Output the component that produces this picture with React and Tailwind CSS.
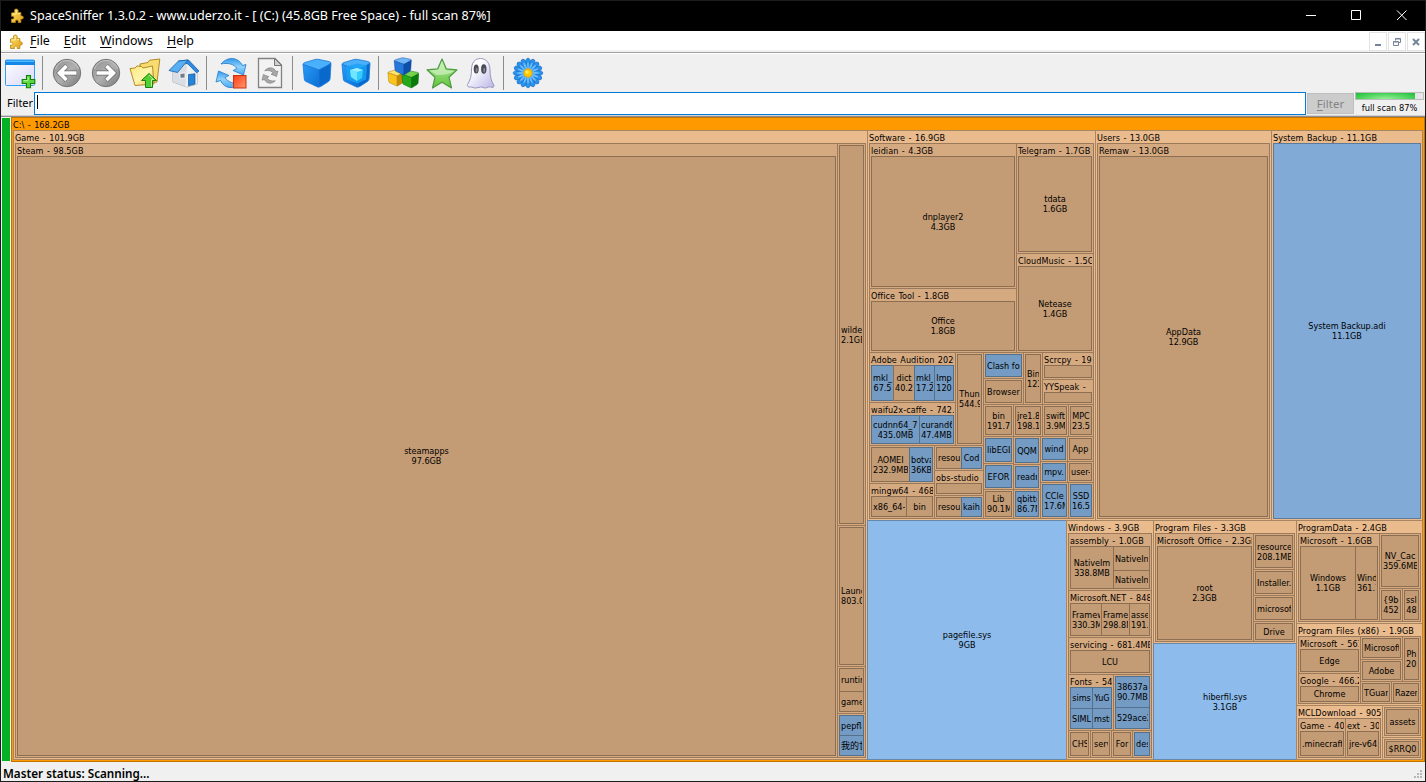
const L = (end, name, size) => ({ kind: 'dir', end, name, size });
const B = (end, name, size) => ({ kind: 'file', end, name, size });
const D = (end, label, child) => ({ kind: 'folder', end, label, child });
const H = (end, ...items) => ({ kind: 'row', end, items });
const V = (end, ...items) => ({ kind: 'col', end, items });

// Every node carries the edge at which it stops along its parent's axis.
const GAME = H(0,
  D(837, 'Steam - 98.5GB', L(0, 'steamapps', '97.6GB')),
  V(865,
    D(525, '', L(0, 'wilder', '2.1GB')),
    D(666, '', L(0, 'Launc', '803.0')),
    D(713, '', V(0, L(691, 'runtin'), L(711, 'game'))),
    D(757, '', V(0, B(735, 'pepfla'), B(755, '我的世'))),
  ),
);

const SOFTWARE_TOP = H(352,
  V(1016,
    D(288, 'leidian - 4.3GB', L(0, 'dnplayer2', '4.3GB')),
    D(352, 'Office Tool - 1.8GB', L(0, 'Office', '1.8GB')),
  ),
  V(1093,
    D(253, 'Telegram - 1.7GB', L(0, 'tdata', '1.6GB')),
    D(352, 'CloudMusic - 1.5GB', L(0, 'Netease', '1.4GB')),
  ),
);

const SOFTWARE_LEFT = V(983,
  H(445,
    V(955,
      D(402, 'Adobe Audition 2020', H(0, B(893, 'mkl_', '67.5'), L(914, 'dict', '40.2'), B(934, 'mkl_', '17.2'), B(953, 'Imp', '120'))),
      D(445, 'waifu2x-caffe - 742.1', H(0, B(919, 'cudnn64_7.', '435.0MB'), B(953, 'curand6', '47.4MB'))),
    ),
    D(983, '', L(0, 'Thun', '544.9')),
  ),
  H(518,
    V(934,
      D(483, '', H(0, L(909, 'AOMEI', '232.9MB'), B(932, 'botva', '36KB'))),
      D(518, 'mingw64 - 468', H(0, L(906, 'x86_64-'), L(932, 'bin'))),
    ),
    V(983,
      D(470, '', H(0, L(961, 'resou'), B(981, 'Cod'))),
      D(495, 'obs-studio - 2', L(0, '')),
      D(518, '', H(0, L(961, 'resou'), B(981, 'kaih'))),
    ),
  ),
);

const SOFTWARE_CORNER = V(1093,
  H(436,
    D(1042, '', L(0, 'jre1.8', '198.1')),
    D(1068, '', L(0, 'swift', '3.9MB')),
    D(1093, '', L(0, 'MPC', '23.5')),
  ),
  H(518,
    V(1040,
      D(464, '', B(0, 'QQM')),
      D(489, '', B(0, 'readm')),
      D(518, '', B(0, 'qbitto', '86.7M')),
    ),
    V(1093,
      H(461, D(1067, '', B(0, 'wind')), D(1093, '', L(0, 'App'))),
      H(482, D(1067, '', B(0, 'mpv.')), D(1093, '', L(0, 'user-'))),
      H(518, D(1068, '', B(0, 'CCle', '17.6M')), D(1093, '', B(0, 'SSD', '16.5'))),
    ),
  ),
);

const SOFTWARE_RIGHT = V(1093,
  H(404,
    V(1023, D(378, '', B(0, 'Clash for')), D(404, '', L(0, 'Browser'))),
    D(1042, '', L(0, 'Bin', '123')),
    V(1093, D(379, 'Scrcpy - 19', L(0, '')), D(404, 'YYSpeak -', L(0, ''))),
  ),
  H(518,
    V(1013,
      D(436, '', L(0, 'bin', '191.7')),
      D(463, '', B(0, 'libEGL')),
      D(489, '', B(0, 'EFOR')),
      D(518, '', L(0, 'Lib', '90.1M')),
    ),
    SOFTWARE_CORNER,
  ),
);

const SOFTWARE = V(0, SOFTWARE_TOP, H(518, SOFTWARE_LEFT, SOFTWARE_RIGHT));

const WINDOWS = V(0,
  D(590, 'assembly - 1.0GB', H(0, L(1113, 'NativeIm', '338.8MB'), V(1149, L(570, 'NativeIn'), L(588, 'NativeIn')))),
  D(637, 'Microsoft.NET - 848', H(0, L(1101, 'Framew', '330.3M'), L(1129, 'Frame', '298.8M'), L(1149, 'asse', '191.'))),
  D(674, 'servicing - 681.4MB', L(0, 'LCU')),
  H(730,
    D(1113, 'Fonts - 54', V(0, H(708, B(1092, 'sims'), B(1111, 'YuG')), H(728, B(1092, 'SIML'), B(1111, 'mstr')))),
    D(1151, '', V(0, B(707, '38637a8', '90.7MB'), B(728, '529ace2'))),
  ),
  H(757,
    D(1090, '', L(0, 'CHS')),
    D(1111, '', L(0, 'serv')),
    D(1132, '', L(0, 'For')),
    D(1151, '', B(0, 'des')),
  ),
);

const PROGRAM_FILES = H(0,
  D(1253, 'Microsoft Office - 2.3GB', L(0, 'root', '2.3GB')),
  V(1294,
    D(569, '', L(0, 'resource', '208.1MB')),
    D(595, '', L(0, 'Installer.')),
    D(621, '', L(0, 'microsoft')),
    D(641, '', L(0, 'Drive')),
  ),
);

const PROGRAM_DATA = H(0,
  D(1379, 'Microsoft - 1.6GB', H(0, L(1355, 'Windows', '1.1GB'), L(1377, 'Wind', '361.7'))),
  V(1420,
    D(588, '', L(0, 'NV_Cac', '359.6MB')),
    H(621, D(1402, '', L(0, '{9bc', '452')), D(1420, '', L(0, 'sslp', '48'))),
  ),
);

const PROGRAM_FILES_X86 = H(0,
  V(1360,
    D(673, 'Microsoft - 561', L(0, 'Edge')),
    D(703, 'Google - 466.2', L(0, 'Chrome')),
  ),
  V(1420,
    H(681,
      V(1402, D(659, '', L(0, 'Microsoft')), D(681, '', L(0, 'Adobe'))),
      D(1420, '', L(0, 'Ph', '20.')),
    ),
    H(703, D(1391, '', L(0, 'TGuar')), D(1420, '', L(0, 'Razer'))),
  ),
);

const UPPER = H(520,
  D(1095, 'Software - 16.9GB', SOFTWARE),
  D(1271, 'Users - 13.0GB', D(0, 'Remaw - 13.0GB', L(0, 'AppData', '12.9GB'))),
  D(1422, 'System Backup - 11.1GB', B(0, 'System Backup.adi', '11.1GB')),
);

const LOWER = H(759,
  B(1066, 'pagefile.sys', '9GB'),
  D(1153, 'Windows - 3.9GB', WINDOWS),
  V(1296,
    D(643, 'Program Files - 3.3GB', PROGRAM_FILES),
    B(759, 'hiberfil.sys', '3.1GB'),
  ),
  V(1422,
    D(623, 'ProgramData - 2.4GB', PROGRAM_DATA),
    D(705, 'Program Files (x86) - 1.9GB', PROGRAM_FILES_X86),
    H(759,
      D(1382, 'MCLDownload - 905', H(0,
        D(1345, 'Game - 40', L(0, '.minecraft')),
        D(1380, 'ext - 302', L(0, 'jre-v64')),
      )),
      V(1422,
        D(737, '', D(0, '', L(0, 'assets'))),
        D(759, '', D(0, '', L(0, '$RRQ0'))),
      ),
    ),
  ),
);

const ROOT = D(0, 'C:\\ - 168.2GB', H(0, D(867, 'Game - 101.9GB', GAME), V(1422, UPPER, LOWER)));

const DIR_SKIN = [
  'bg-[#ff9900] border-[#c17500]',
  'bg-[#eabb8d] border-[#a98663]',
  'bg-[#d6aa80] border-[#9a7a5a]',
  'bg-[#c39b74] border-[#8c6f53]',
];
const FILE_SKIN = [
  '',
  'bg-[#8dbbec] border-[#6787ab]',
  'bg-[#81aad7] border-[#5c7a9c]',
  'bg-[#749bc4] border-[#53708d]',
];

function Tile({ node, level, x0, y0, x1, y1 }) {
  if (node.kind === 'row' || node.kind === 'col') {
    const row = node.kind === 'row';
    let at = row ? x0 : y0;
    return (
      <div className={row ? 'flex' : 'flex flex-col'} style={{ width: x1 - x0, height: y1 - y0 }}>
        {node.items.map((item, i) => {
          const from = at;
          at = item.end;
          const box = row ? { x0: from, x1: item.end, y0, y1 } : { x0, x1, y0: from, y1: item.end };
          return (
            <div key={i} className="shrink-0" style={{ width: box.x1 - box.x0, height: box.y1 - box.y0 }}>
              <Tile node={item} level={level} {...box} />
            </div>
          );
        })}
      </div>
    );
  }
  // Neighbouring tiles share one border line, so each is a pixel larger than its slot.
  const size = { width: x1 - x0 + 1, height: y1 - y0 + 1 };
  const depth = Math.min(level, 3);
  if (node.kind === 'folder') {
    return (
      <div className={`overflow-hidden border ${DIR_SKIN[depth]}`} style={size}>
        {node.label ? (
          <div className="mr-px h-3 overflow-hidden whitespace-pre pl-px leading-[14px] tracking-[0.06px] [word-spacing:0.8px]">{node.label}</div>
        ) : (
          <div className="h-px" />
        )}
        <div className="pl-px">
          <Tile node={node.child} level={level + 1} x0={x0 + 2} y0={y0 + (node.label ? 13 : 2)} x1={x1 - 2} y1={y1 - 2} />
        </div>
      </div>
    );
  }
  const skin = node.kind === 'file' ? FILE_SKIN[depth] : DIR_SKIN[depth];
  return (
    <div className={`flex flex-col justify-center border px-px ${skin}`} style={size}>
      <div className="overflow-hidden whitespace-nowrap text-center leading-[10px]">
        <div>{node.name}</div>
        {node.size && <div>{node.size}</div>}
      </div>
    </div>
  );
}

const Svg = ({ children }) => (
  <svg width="32" height="32" viewBox="0 0 32 32" className="block shrink-0">{children}</svg>
);

const Puzzle = () => (
  <svg width="14" height="16" viewBox="0 0 14 16" className="block shrink-0">
    <path d="M5 4.500C3.800 2.200 4.600 1 6.200 1s2.600 1.200 1.700 3.500h3v3.600c1.400-.6 2.400.2 2.400 1.400s-1 2-2.400 1.400v3.600H8.200c.4-1.700-.4-2.400-1.300-2.400s-1.800.7-1.400 2.400H1.500V11c1.800.3 2.400-.4 2.400-1.300S3.300 8 1.500 8.400V5z" fill="url(#pz)" stroke="#b98212" strokeWidth=".8" />
    <path d="M2.500 6h3.700V2.500M8 5.600h2" stroke="#fff3a0" fill="none" />
  </svg>
);

const Arrow = ({ flip }) => (
  <Svg>
    <circle cx="16" cy="16" r="13.700" fill="url(#gray)" stroke="#757575" />
    <path d="M4.500 12a12 12 0 0 1 23 0" fill="none" stroke="#cdcdcd" opacity=".8" />
    <g transform={flip ? 'translate(32 0) scale(-1 1)' : undefined} fill="none" strokeLinejoin="miter">
      <path d="M15.800 8.700L8.500 16l7.300 7.300M9.500 16H26" stroke="#6a6a6a" strokeWidth="5" />
      <path d="M15.500 9L8.500 16l7 7M9.500 16H25.500" stroke="#fff" strokeWidth="3.600" />
    </g>
  </Svg>
);

const NewWindow = () => (
  <Svg>
    <rect x="1.500" y="3" width="29" height="25.500" rx="1" fill="url(#win)" stroke="#2fa0f5" />
    <path d="M1 4.500Q1 3 2.500 3h27Q31 3 31 4.500V8H1z" fill="#1488e8" />
    <path d="M2 4.300h28" stroke="#4fb8ff" strokeWidth="1.400" />
    <path d="M22.500 18.500h4v4h4.300v4h-4.300v4.300h-4v-4.300h-4.300v-4h4.300z" fill="#58d83d" stroke="#16800f" strokeWidth="1.100" />
    <path d="M24 20v3.700h-4.300" stroke="#b9f7a1" fill="none" />
  </Svg>
);

const FolderUp = () => (
  <Svg>
    <path d="M11 7l8-1.500 1.500-2.300L30.800 2 28 25l-16 2z" fill="#f7dd71" stroke="#b48a22" />
    <path d="M1 11.500l5-.5 2-2 4.500.5 1.500 1.500 9.500-2L25 27 6 28.500z" fill="url(#folder)" stroke="#b48a22" />
    <path d="M20 16.500l7.500 7h-4V30.500h-7V23.500h-4z" fill="#52cf35" stroke="#17800f" />
    <path d="M20 18l4.700 4.500h-2.200v7" stroke="#b7f59d" fill="none" />
  </Svg>
);

const House = () => (
  <Svg>
    <path d="M5 14L20 6l9 9v12l-10 3-14-5z" fill="#f2f3f5" stroke="#9298a3" strokeWidth=".8" />
    <path d="M5 15.500L9 15l10-9v24L5 25z" fill="#dadde3" />
    <path d="M19 6.500L17.500 30l11.500-3V16z" fill="#eef0f4" />
    <path d="M10.500 4L20.500 3 31 14l-2.500 1.800L20 7z" fill="#2e8be0" stroke="#1761aa" strokeWidth=".8" />
    <path d="M1 13.500L10.500 4l9.500-1L9.500 15.500z" fill="#5aaef3" stroke="#1761aa" strokeWidth=".8" />
    <path d="M20.500 17.500l6.500-.7v10.200l-6.500 1.700z" fill="#2585da" stroke="#155495" strokeWidth=".7" />
    <path d="M12 16.500l5-.5v5l-5 .3z" fill="#737a88" stroke="#fff" strokeWidth=".8" />
  </Svg>
);

const RefreshPaths = ({ fill, stroke }) => (
  <g fill={fill} stroke={stroke} strokeWidth=".8">
    <path d="M6 7C12-.5 23-.5 27.500 8.500l3.500-1L28.500 18 18 13.500l4-2C19 7 13 5.500 6 7z" />
    <path d="M26 26C20 33 9 32 5.500 23.500L1 25 3.500 14 14 18.500l-4 2c3 5 9 6.500 16 5.500z" />
  </g>
);

const Sync = () => (
  <Svg>
    <RefreshPaths fill="url(#cyan)" stroke="#2579c6" />
    <rect x="18.500" y="18.500" width="12.500" height="12.500" fill="url(#red)" stroke="#c9320e" />
  </Svg>
);

const DocRefresh = () => (
  <Svg>
    <path d="M4.500 1.500h16.500L27.500 8v22.500h-23z" fill="#f3f3f3" stroke="#828282" strokeWidth="1.300" />
    <path d="M20.500 1.500V8.500h7z" fill="#d0d0d0" stroke="#777" />
    <g transform="translate(7.500 10) scale(.53)">
      <RefreshPaths fill="#a9a9a9" stroke="#565656" />
    </g>
  </Svg>
);

const CubeShape = ({ top, left, right, edge }) => (
  <g strokeLinejoin="round" stroke={edge} strokeWidth=".8">
    <path d="M2 7.500Q2 6 4 5.500L14 2.500q2-.5 4 0l10 2q2 .5 2 2L18 13z" fill={top} />
    <path d="M2 7.500L18 13V30q-1 .5-2.500-.5L5 24.500Q3.500 24 3.300 22z" fill={left} />
    <path d="M30 6.500L18 13V30q1 0 2.500-1l7-4.500q1.500-1 1.600-3z" fill={right} />
  </g>
);

const Cube = ({ glow }) => (
  <Svg>
    <CubeShape top="#4ab0fb" left="url(#cube)" right="#0868cb" edge="#1a78d8" />
    {glow && (
      <g>
        <path d="M6 9.500l11-3 10 2-1 14-8.500 4L7 22.500z" fill="#19a2f5" opacity=".8" />
        <path d="M10 13l7-2 6 2-1 8-5 3-6-4z" fill="#35ccff" />
        <path d="M10 13l7 2 6-2-6-2z" fill="#9cefff" />
        <path d="M10 13l7 2v9l-6-4z" fill="#6fe6ff" />
      </g>
    )}
  </Svg>
);

const Blocks = () => (
  <Svg>
    <g transform="translate(-.2 11.500) scale(.58)"><CubeShape top="#ffe36b" left="#fbc41c" right="#c38c05" edge="#a87503" /></g>
    <g transform="translate(13.700 12.700) scale(.6)"><CubeShape top="#77d34d" left="#25a81a" right="#087b0a" edge="#056a08" /></g>
    <g transform="translate(6 -.6) scale(.61)"><CubeShape top="#70b6fb" left="#2577dc" right="#0c4fa8" edge="#0e4b99" /></g>
  </Svg>
);

const Star = () => (
  <Svg>
    <path d="M16 2l4.300 9.800 10.700 1L23 20.200 25.500 31 16 25.300 6.500 31 9 20.200 1 12.800l10.700-1z" fill="url(#star)" stroke="#4f9a42" strokeWidth="1.200" strokeLinejoin="round" />
    <path d="M16 4l3.500 9 9 1c-6 4-13 4-18 4l-7-4.500 9-1z" fill="#d6f5c8" opacity=".65" />
  </Svg>
);

const Ghost = () => (
  <Svg>
    <path d="M6.500 13C6.500 5.500 10 1.500 15.500 1.500S25 6 25 13c0 6 1 11 4 15.500.5 1.500-1.500 2.500-3.500 1.500-2-.8-3 1-5 1s-3-1.200-5-1-3 1-5 1-3-1.200-5-1-3.700-.5-3-2.500c3-4.500 4-9.500 4-14.500z" fill="url(#ghost)" stroke="#9a96bd" />
    <ellipse cx="11.200" cy="12" rx="2.500" ry="4.500" fill="#484951" />
    <ellipse cx="18.800" cy="12" rx="2.700" ry="4.700" fill="#484951" />
    <ellipse cx="11.600" cy="13" rx="1" ry="2.500" fill="#858792" />
    <ellipse cx="19.200" cy="13" rx="1" ry="2.500" fill="#858792" />
  </Svg>
);

const PETALS = Array.from({ length: 16 }, (_, i) => i * 22.5);
const Flower = () => (
  <Svg>
    {PETALS.map((a) => (
      <ellipse key={a} cx="16" cy="6.200" rx="2.500" ry="5" transform={`rotate(${a} 16 16)`} fill="#2b92ec" stroke="#1468c4" strokeWidth=".6" />
    ))}
    {PETALS.map((a) => (
      <ellipse key={a} cx="16" cy="9" rx=".9" ry="4" transform={`rotate(${a} 16 16)`} fill="#6cbffc" />
    ))}
    <circle cx="16" cy="16" r="4.200" fill="#ffc800" stroke="#d79300" strokeWidth=".8" />
    <circle cx="15" cy="15" r="1.800" fill="#ffe750" />
  </Svg>
);

const Defs = () => (
  <svg width="0" height="0" className="absolute">
    <defs>
      <linearGradient id="pz" x1="0" y1="0" x2="1" y2="1"><stop offset="0" stopColor="#ffe562" /><stop offset="1" stopColor="#dfa01d" /></linearGradient>
      <linearGradient id="gray" x1="0" y1="0" x2="1" y2="1"><stop offset="0" stopColor="#8f8f8f" /><stop offset=".5" stopColor="#b0b0b0" /><stop offset="1" stopColor="#787878" /></linearGradient>
      <linearGradient id="win" x1="0" y1="0" x2="1" y2="1"><stop offset="0" stopColor="#ffffff" /><stop offset="1" stopColor="#d8d8f8" /></linearGradient>
      <linearGradient id="folder" x1="0" y1="0" x2="1" y2="1"><stop offset="0" stopColor="#ffe77a" /><stop offset=".5" stopColor="#fff4ae" /><stop offset="1" stopColor="#eec64a" /></linearGradient>
      <linearGradient id="cyan" x1="0" y1="0" x2="0" y2="1"><stop offset="0" stopColor="#3398ec" /><stop offset=".5" stopColor="#8ed2fb" /><stop offset="1" stopColor="#49aaf3" /></linearGradient>
      <linearGradient id="red" x1="0" y1="0" x2="1" y2="1"><stop offset="0" stopColor="#ff3a10" /><stop offset="1" stopColor="#ff9a70" /></linearGradient>
      <linearGradient id="cube" x1="0" y1="0" x2="1" y2="1"><stop offset="0" stopColor="#2a9bf7" /><stop offset="1" stopColor="#0b6fd4" /></linearGradient>
      <linearGradient id="star" x1="0" y1="0" x2="0" y2="1"><stop offset="0" stopColor="#b8e8a5" /><stop offset="1" stopColor="#5fc63a" /></linearGradient>
      <linearGradient id="ghost" x1="0" y1="0" x2="1" y2="1"><stop offset=".3" stopColor="#ffffff" /><stop offset="1" stopColor="#b9b5e8" /></linearGradient>
    </defs>
  </svg>
);

const TOOLS = [
  [NewWindow],
  [() => <Arrow />, () => <Arrow flip />, FolderUp, House],
  [Sync, DocRefresh],
  [() => <Cube />, () => <Cube glow />],
  [Blocks, Star, Ghost],
  [Flower],
];

const MENUS = ['File', 'Edit', 'Windows', 'Help'];

const Key = ({ text }) => (
  <span><span className="underline underline-offset-2">{text[0]}</span>{text.slice(1)}</span>
);

export default function App() {
  return (
    <div className="flex h-[782px] w-[1426px] flex-col overflow-hidden border border-[#1c1c1c] bg-[#f0f0f0] font-['Noto_Sans','Noto_Sans_CJK_SC',sans-serif] text-black">
      <Defs />
      <header className="flex h-[30px] shrink-0 items-center bg-black pl-[9px] text-white">
        <Puzzle />
        <h1 className="ml-1.5 grow whitespace-pre text-[12.6px]">SpaceSniffer 1.3.0.2 - www.uderzo.it - [ (C:) (45.8GB Free Space) - full scan 87%]</h1>
        <svg width="120" height="12" viewBox="0 0 120 12" className="mr-[9px] block" fill="none" stroke="#fff">
          <path d="M10 5.500h10M55.500.5h9v9h-9zM101 .5l9.500 9.500M110.500.5L101 10" />
        </svg>
      </header>

      <nav className="flex h-[22px] shrink-0 items-center border-b border-[#a0a0a0] bg-white pl-2 shadow-[inset_0_-2px_0_#f0f0f0]">
        <Puzzle />
        <div className="mb-px ml-[7px] flex grow gap-3.5 text-[12.4px]">
          {MENUS.map((m) => <Key key={m} text={m} />)}
        </div>
        <div className="flex gap-px self-start pt-px">
          <div className="flex h-[19px] w-[18px] items-end justify-center border border-[#e3e3e3] bg-white pb-1"><div className="h-0.5 w-1.5 bg-[#74859a]" /></div>
          <div className="flex h-[19px] w-[18px] items-center justify-center border border-[#e3e3e3] bg-white">
            <svg width="8" height="8" viewBox="0 0 8 8" fill="none" stroke="#74859a"><path d="M2.500 2.500V.5h5v4H6M2 1h5.500M.5 3.500h5v4h-5zM.5 4h5" /></svg>
          </div>
          <div className="flex h-[19px] w-[18px] items-center justify-center border border-[#e3e3e3] bg-white">
            <svg width="8" height="8" viewBox="0 0 8 8" stroke="#74859a" strokeWidth="2"><path d="M1 1l6 6M7 1L1 7" /></svg>
          </div>
        </div>
      </nav>

      <div className="flex h-[39px] shrink-0 items-center border-t border-white">
        {TOOLS.map((group, g) => (
          <div key={g} className="flex items-center">
            {g > 0 && <div className="ml-0.5 mr-[5px] h-[34px] w-px bg-[#8c8c8c]" />}
            {group.map((Icon, i) => (
              <div key={i} className="w-[39px] pl-[3px]"><Icon /></div>
            ))}
          </div>
        ))}
      </div>

      <div className="flex h-[24px] shrink-0 border-b border-[#d0d0d0]">
        <label className="flex w-[33px] items-center pl-1.5 text-[11px]">Filter</label>
        <div className="flex w-[1272px] border border-[#0078d7] bg-white px-0.5 py-0.5"><div className="h-[14px] w-px bg-black" /></div>
        <div className="ml-px mt-px flex h-[21px] w-[47px] items-center justify-center border border-[#bfbfbf] bg-[#cccccc] text-[11.5px] text-[#838383]"><Key text="Filter" /></div>
        <div className="ml-px flex w-[69px] flex-col">
          <div className="h-[9px] border border-[#bcbcbc] bg-[#e6e6e6]">
            <div className="h-full w-[59px] bg-[radial-gradient(ellipse_at_50%_100%,#9aee9a_0%,#5fdc6a_45%,#1dbb36_100%)]" />
          </div>
          <div className="whitespace-nowrap text-center font-['DejaVu_Sans_Condensed','DejaVu_Sans',sans-serif] text-[9.2px] leading-[15px]">full scan 87%</div>
        </div>
      </div>

      <main className="flex h-[646px] shrink-0 border-t border-[#8f8f8f]">
        <div className="m-px w-2 bg-[#06b025]" />
        <div className="h-[645px] overflow-hidden font-['DejaVu_Sans_Condensed','DejaVu_Sans','Noto_Sans_CJK_SC',sans-serif] text-[9px]">
          <Tile node={ROOT} level={0} x0={11} y0={117} x1={1424} y1={761} />
        </div>
      </main>

      <footer className="flex grow items-center justify-between pl-0.5 text-[11.7px] font-semibold leading-none">
        <span className="pt-1">Master status: Scanning...</span>
        <svg width="12" height="12" viewBox="0 0 12 12" fill="#b8b8b8" className="self-end"><path d="M7 1h2v2H7zM4 4h2v2H4zM7 4h2v2H7zM1 7h2v2H1zM4 7h2v2H4zM7 7h2v2H7z" /></svg>
      </footer>
    </div>
  );
}
